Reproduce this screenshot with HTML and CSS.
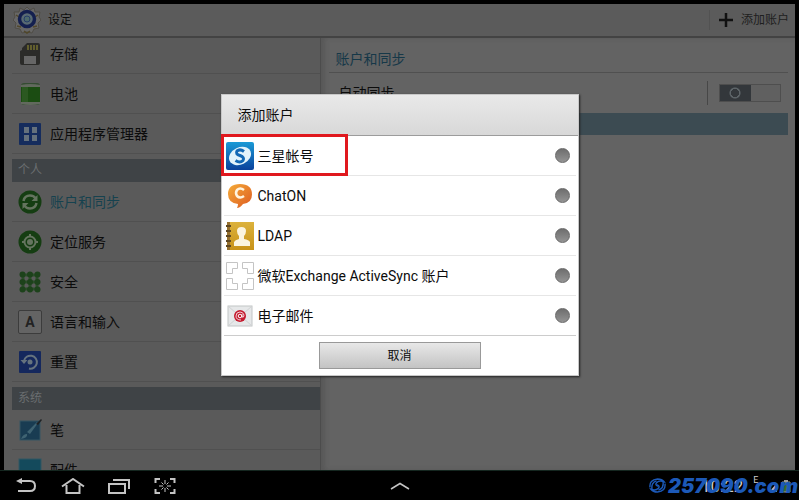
FILE: index.html
```
<!DOCTYPE html>
<html lang="zh-CN">
<head>
  <meta charset="UTF-8">
  <meta name="viewport" content="width=device-width, initial-scale=1.0">
  <title>设定 - 添加账户</title>
  <link rel="stylesheet" href="styles.css">
</head>
<body>
  <div class="screen">
    <header class="topbar">
      <svg class="logo" viewBox="0 0 28 28">
        <path d="M14 1l3 3 4-2 1 4 5 0-1 5 2 3-3 3 1 5-5 1-2 4-5-1-5 1-2-4-5-1 1-5-3-3 2-3-1-5 5 0 1-4 4 2z" fill="#676767" stroke="#4f4c45" stroke-width="1"/>
        <path d="M3 9l3 2M25 9l-3 2M4 20l4 1M24 20l-4 1M11 25l3 2 3-2" stroke="#51472a" stroke-width="1.5" fill="none"/>
        <circle cx="14" cy="13" r="7.5" fill="#596a72" stroke="#14204f" stroke-width="3.5"/>
        <circle cx="14" cy="13" r="3" fill="#4d696c" stroke="#253d69" stroke-width="1"/>
      </svg>
      <h1>设定</h1>
      <button class="add">
        <svg viewBox="0 0 16 16"><path d="M8 1v14M1 8h14" stroke="#111" stroke-width="2.5"/></svg>
        添加账户
      </button>
    </header>

    <div class="panels">
      <nav class="menu">
        <a href="#" class="item">
          <svg viewBox="0 0 24 24">
            <path d="M9 1h11q2 0 2 2v18q0 2-2 2H4q-2 0-2-2V9l2-1V6z" fill="#2b2b29"/>
            <path d="M10 3v5M13 3v5M16 3v5M19 3v5" stroke="#69652f" stroke-width="1.8"/>
            <path d="M6 14h12v8H6z" fill="#666"/>
          </svg>
          存储
        </a>
        <a href="#" class="item">
          <svg viewBox="0 0 24 24">
            <rect x="3" y="1" width="19" height="22" rx="3" fill="#344c32"/>
            <rect x="3" y="5" width="19" height="15" fill="#1b4c12"/>
            <path d="M4 5h6v15H4z" fill="#2b5821"/>
            <path d="M3 3q9-2 19 0v2H3zM3 20h19v2q-10 2-19 0z" fill="#62695e"/>
          </svg>
          电池
        </a>
        <a href="#" class="item">
          <svg viewBox="0 0 24 24">
            <rect x="1" y="1" width="22" height="22" rx="1" fill="#152c5d"/>
            <path d="M6 5h5v6H6zM14 5h5v6h-5zM6 13h5v6H6zM14 13h5v6h-5z" fill="#65717c"/>
          </svg>
          应用程序管理器
        </a>
        <h2>个人</h2>
        <a href="#" class="item active">
          <svg viewBox="0 0 24 24">
            <circle cx="12" cy="12" r="11.5" fill="#153d12"/>
            <path d="M5.500 11q1-5.500 6.500-5.500 4 0 5.500 3M18.500 13q-1 5.500-6.500 5.500-4 0-5.500-3" fill="none" stroke="#65745f" stroke-width="2.500"/>
            <path d="M19.500 5v6h-6zM4.500 19v-6h6z" fill="#65745f"/>
          </svg>
          账户和同步
        </a>
        <a href="#" class="item">
          <svg viewBox="0 0 24 24">
            <circle cx="12" cy="12" r="11.5" fill="#153d12"/>
            <circle cx="12" cy="12" r="5.500" fill="none" stroke="#65745f" stroke-width="2"/>
            <circle cx="12" cy="12" r="3" fill="#65745f"/>
            <path d="M12 4v3M12 17v3M4 12h3M17 12h3" stroke="#65745f" stroke-width="2"/>
          </svg>
          定位服务
        </a>
        <a href="#" class="item">
          <svg viewBox="0 0 24 24">
            <path d="M5 5h14v14H5zM12 5v14M5 12h14" fill="none" stroke="#2c4d2a" stroke-width="3"/>
            <g fill="#1d421b">
              <circle cx="4.500" cy="4.500" r="3"/><circle cx="12" cy="4.500" r="3"/><circle cx="19.500" cy="4.500" r="3"/>
              <circle cx="4.500" cy="12" r="3"/><circle cx="12" cy="12" r="3"/><circle cx="19.500" cy="12" r="3"/>
              <circle cx="4.500" cy="19.500" r="3"/><circle cx="12" cy="19.500" r="3"/><circle cx="19.500" cy="19.500" r="3"/>
            </g>
          </svg>
          安全
        </a>
        <a href="#" class="item">
          <span class="keycap">A</span>
          语言和输入
        </a>
        <a href="#" class="item">
          <svg viewBox="0 0 24 24">
            <rect x="1" y="1" width="22" height="22" rx="1" fill="#15285d"/>
            <path d="M6 11a6.500 6.500 0 1 1 5 7.500" fill="none" stroke="#66737e" stroke-width="2"/>
            <path d="M2.500 10h7L6 14z" fill="#66737e"/>
            <circle cx="12" cy="12" r="2.500" fill="#66737e"/>
          </svg>
          重置
        </a>
        <h2>系统</h2>
        <a href="#" class="item">
          <svg viewBox="0 0 24 24">
            <rect x="2" y="3" width="20" height="19" fill="#193c52" stroke="#355563" stroke-width="1"/>
            <path d="M3 21q2-5 6-5 1 4-6 5zM9 14L19 4l1 1-8 11z" fill="#3f6372"/>
            <path d="M18 6l5-5 1 1-4 5z" fill="#202224"/>
          </svg>
          笔
        </a>
        <a href="#" class="item">
          <svg viewBox="0 0 24 24"><rect x="1" y="1" width="22" height="20" fill="#144a5c" stroke="#315762"/></svg>
          配件
        </a>
      </nav>

      <main class="detail">
        <h3>账户和同步</h3>
        <div class="sync">
          <label for="autosync">自动同步</label>
          <span class="toggle"><input type="checkbox" id="autosync"></span>
        </div>
        <div class="band"></div>
      </main>
    </div>

    <div class="overlay">
      <form class="dialog" role="dialog" aria-labelledby="dialog-title">
        <h2 id="dialog-title">添加账户</h2>
        <label class="option marked">
          <svg viewBox="0 0 28 28">
            <defs>
              <linearGradient id="blue" x1="0" y1="0" x2="0" y2="1"><stop offset="0" stop-color="#1a9ad6"/><stop offset="1" stop-color="#0b429c"/></linearGradient>
              <linearGradient id="orange" x1="0" y1="0" x2="1" y2="1"><stop offset="0" stop-color="#f5ac38"/><stop offset="1" stop-color="#dd5a22"/></linearGradient>
              <linearGradient id="gold" x1="0" y1="0" x2="0" y2="1"><stop offset="0" stop-color="#dcb23c"/><stop offset="1" stop-color="#c89218"/></linearGradient>
            </defs>
            <rect width="28" height="28" rx="2" fill="url(#blue)"/>
            <ellipse cx="14" cy="14" rx="11.500" ry="8.500" transform="rotate(-25 14 14)" fill="#e2f3fb"/>
            <path d="M18 9.500q-4-3-7-.5-2 3 3 4.500 5 2 3 5-3 3-7.500 0" fill="none" stroke="#1268b5" stroke-width="3"/>
          </svg>
          <span>三星帐号</span>
          <input type="radio" name="account">
        </label>
        <label class="option">
          <svg viewBox="0 0 28 28">
            <path d="M14 2q12 0 12 10.500Q26 21 17 22q-3 4-6 4 1-2 1-4Q2 21 2 12 2 2 14 2z" fill="url(#orange)"/>
            <path d="M18 8q-4-3-7 0-2 3 0 6 3 3 7 0" fill="none" stroke="#fff4df" stroke-width="2.500"/>
          </svg>
          <span>ChatON</span>
          <input type="radio" name="account">
        </label>
        <label class="option">
          <svg viewBox="0 0 28 28">
            <path d="M1 0h5v28H1z" fill="#96702d"/>
            <rect x="4" width="24" height="28" fill="url(#gold)"/>
            <path d="M0 4h5M0 9h5M0 14h5M0 19h5M0 24h5" stroke="#5e4722" stroke-width="2"/>
            <path d="M8 24v-4q1-2 5-3v-3q-2-2-2-5 0-4 4.500-4T20 9q0 3-2 5v3q5 1 6 3v4z" fill="#fbf4df"/>
          </svg>
          <span>LDAP</span>
          <input type="radio" name="account">
        </label>
        <label class="option">
          <svg viewBox="0 0 28 28">
            <path d="M.5.500h11v6h-5v5h-6zM27.500.500h-11v6h5v5h6zM.5 27.500h11v-6h-5v-5h-6zM27.500 27.500h-11v-6h5v-5h6z" fill="#fff" stroke="#c4c4c4"/>
          </svg>
          <span>微软Exchange ActiveSync 账户</span>
          <input type="radio" name="account">
        </label>
        <label class="option">
          <svg viewBox="0 0 28 28">
            <rect x="2" y="4" width="24" height="20" fill="#e6e8e9" stroke="#c2c5c6" stroke-width="1"/>
            <path d="M2 24l9-8M26 24l-9-8M2 4l9 8M26 4l-9 8" stroke="#d0d2d3"/>
            <circle cx="14" cy="14" r="6" fill="#c41a2e"/>
            <circle cx="14" cy="14" r="1.800" fill="none" stroke="#fff"/>
            <path d="M16 12v3q2 1 2-2-1-3-4-3-4 0-4 4t5 4" fill="none" stroke="#fff" stroke-width=".8"/>
          </svg>
          <span>电子邮件</span>
          <input type="radio" name="account">
        </label>
        <div class="actions"><button type="button">取消</button></div>
      </form>
    </div>
  </div>

  <footer class="navbar">
    <button aria-label="返回"><svg viewBox="0 0 24 16"><path d="M6 3h9q5 0 5 5t-5 5H3" fill="none" stroke="#c4c4c4" stroke-width="2"/><path d="M1 3l6-3v6z" fill="#c4c4c4"/></svg></button>
    <button aria-label="主屏幕"><svg viewBox="0 0 24 16"><path d="M1 8.500L12 1l11 7.500M5.500 7v8h13V7" fill="none" stroke="#c4c4c4" stroke-width="2"/></svg></button>
    <button aria-label="最近应用"><svg viewBox="0 0 24 16"><path d="M2 6h16v9H2zM6 2h16v9" fill="none" stroke="#c4c4c4" stroke-width="2"/></svg></button>
    <button aria-label="截屏"><svg viewBox="0 0 24 16"><path d="M7 1H2.500v4M17 1h4.500v4M7 15H2.500v-4M17 15h4.500v-4" fill="none" stroke="#c4c4c4" stroke-width="2"/><path d="M12 2v4M12 10v4M6 8h4M14 8h4M8.500 4.500l2 2M15.500 4.500l-2 2M8.500 11.500l2-2M15.500 11.500l-2-2" stroke="#c4c4c4"/></svg></button>
    <button class="up" aria-label="展开"><svg viewBox="0 0 20 8"><path d="M1 7l9-5.500L19 7" fill="none" stroke="#c4c4c4" stroke-width="1.500"/></svg></button>
    <div class="status">
      <span class="clock">10:22</span>
      <span class="net">E</span>
      <svg viewBox="0 0 24 14"><path d="M1 13L9 4v9z" fill="#bbb"/><path d="M14 3h8v10h-8z" fill="#3d6d2b" stroke="#999"/><path d="M16 1h4v2h-4z" fill="#999"/></svg>
      <div class="brand">
        <svg viewBox="0 0 18 16">
          <g fill="none" stroke="#1c59b8" stroke-width="1.500">
            <path d="M1 10Q0 2 9 1q5 0 7 3-5-2-8 1-2 3 2 4"/>
            <path d="M3 12q-1-7 5-9"/>
            <path d="M17 6q1 8-8 9-5 0-7-3 5 2 8-1 2-3-2-4"/>
            <path d="M15 4q1 7-5 9"/>
          </g>
        </svg>
        257090.com
      </div>
    </div>
  </footer>
</body>
</html>
```
FILE: styles.css
```
*, *::after { box-sizing: border-box; }
body {
  margin: 0; min-height: 100vh; display: flex; flex-direction: column;
  background: #000; color: #0c0c0c;
  font: 14px/20px Roboto, "Noto Sans CJK SC", sans-serif;
}
h1, h2, h3 { margin: 0; font-size: 14px; font-weight: normal; }
button { padding: 0; border: 0; background: none; font: inherit; color: inherit; cursor: pointer; }
svg { display: block; flex: none; }

.screen {
  position: relative; flex: 1 1 0; min-height: 0; padding: 4px 4px 0;
  display: flex; flex-direction: column; overflow: hidden;
}

.topbar {
  flex: none; height: 34px; padding: 0 6px 0 9px; display: flex; align-items: center; gap: 7px;
  background: #5b5b5b; border-bottom: 2px solid #434343;
}
.logo { width: 28px; height: 28px; }
.topbar h1 { font-size: 12px; }
.add {
  margin-left: auto; height: 20px; padding-left: 8px; display: flex; align-items: center; gap: 7px;
  font-size: 12px; border-left: 1px solid #525252; color: #1e1e1e;
}
.add svg { width: 16px; height: 16px; }

.panels { flex: 1; min-height: 0; display: flex; }
.menu { width: 40%; overflow: hidden; background: #5a5a5a; padding-left: 8px; }
.item {
  height: 40px; padding-left: 6px; display: flex; align-items: center; gap: 8px;
  color: #0c0c0c; text-decoration: none; border-bottom: 1px solid #505050;
}
.item:first-child { margin-top: -4px; }
.item svg { width: 24px; height: 24px; }
.item.active { color: #16424f; }
.menu h2 {
  height: 23px; margin-top: 5px; padding-left: 6px; line-height: 23px; font-size: 12px;
  background: #3f4346; color: #6a6e70;
}
.keycap {
  width: 24px; height: 24px; border: 1px solid #3c3c3c; border-radius: 2px; background: #646464;
  font-weight: bold; line-height: 22px; text-align: center; color: #222;
}

.detail { flex: 1; padding: 0 7px 0 8px; background: #636363; border-left: 1px solid #4c4c4c; box-shadow: inset 4px 0 4px #585858; }
.detail h3 { height: 35px; padding: 11px 6px 0; line-height: 20px; color: #163848; border-bottom: 1px solid #505050; }
.sync { height: 40px; padding: 0 7px 0 9px; display: flex; align-items: center; justify-content: space-between; }
.toggle { height: 24px; padding-left: 11px; display: flex; align-items: center; border-left: 1px solid #474747; }
.toggle input {
  appearance: none; width: 62px; height: 18px; margin: 0; border: 1px solid #4e4e4e;
  background: radial-gradient(circle at 15px 8px, transparent 4px, #5d6468 4px, #5d6468 5px, transparent 6px), linear-gradient(90deg, #33373b 31px, #606060 31px);
}
.band { height: 22px; background: #3c4b52; }

.overlay { position: absolute; inset: 0; display: flex; align-items: center; justify-content: center; }
.dialog { width: 45%; min-width: 300px; max-width: 358px; background: #fff; border: 1px solid #c8c8c8; box-shadow: 1px 1px 2px #222; }
.dialog h2 { height: 41px; padding-left: 16px; line-height: 40px; background: linear-gradient(#e9e9e9, #d8d8d8); border-bottom: 1px solid #9c9c9c; }
.option { position: relative; height: 40px; margin: 0 2px; padding: 0 6px 0 2px; display: flex; align-items: center; gap: 4px; border-bottom: 1px solid #e6e6e6; }
.option svg { width: 28px; height: 28px; }
.option span { flex: 1; }
.option input { appearance: none; width: 15px; height: 15px; margin: 0; border: 1px solid #686868; border-radius: 50%; background: linear-gradient(#6e6e6e, #939393); }
.option:nth-of-type(5) { border-color: #ccc; }
/* highlighted account type */
.marked::after { content: ""; position: absolute; left: -3px; top: -2px; width: 127px; height: 42px; border: 3px solid #e0181e; z-index: 1; }
.actions { padding: 6px; display: flex; justify-content: center; }
.actions button { width: 162px; height: 27px; border: 1px solid #999; background: linear-gradient(#e8e8e8, #c3c3c3); font-size: 12px; }

.navbar { position: relative; flex: none; height: 30px; padding: 0 0 0 15px; display: flex; align-items: center; gap: 22px; border-top: 1px solid #14261f; }
.navbar button svg { width: 24px; height: 16px; }
.navbar .up { position: absolute; left: 50%; transform: translateX(-50%); }
.navbar .up svg { width: 20px; height: 8px; }
.status { position: relative; margin-left: auto; width: 150px; height: 24px; padding-left: 52px; display: flex; align-items: center; gap: 10px; color: #ccc; }
.clock { font-size: 17px; }
.net { font-size: 9px; line-height: 12px; align-self: flex-start; }
.status svg { width: 24px; height: 14px; }
.brand {
  position: absolute; inset: 0; display: flex; align-items: center; gap: 2px;
  color: #1c59b8; font: italic 900 20px/24px Inter, sans-serif; white-space: nowrap;
}
.status .brand svg { width: 17px; height: 15px; }
```
